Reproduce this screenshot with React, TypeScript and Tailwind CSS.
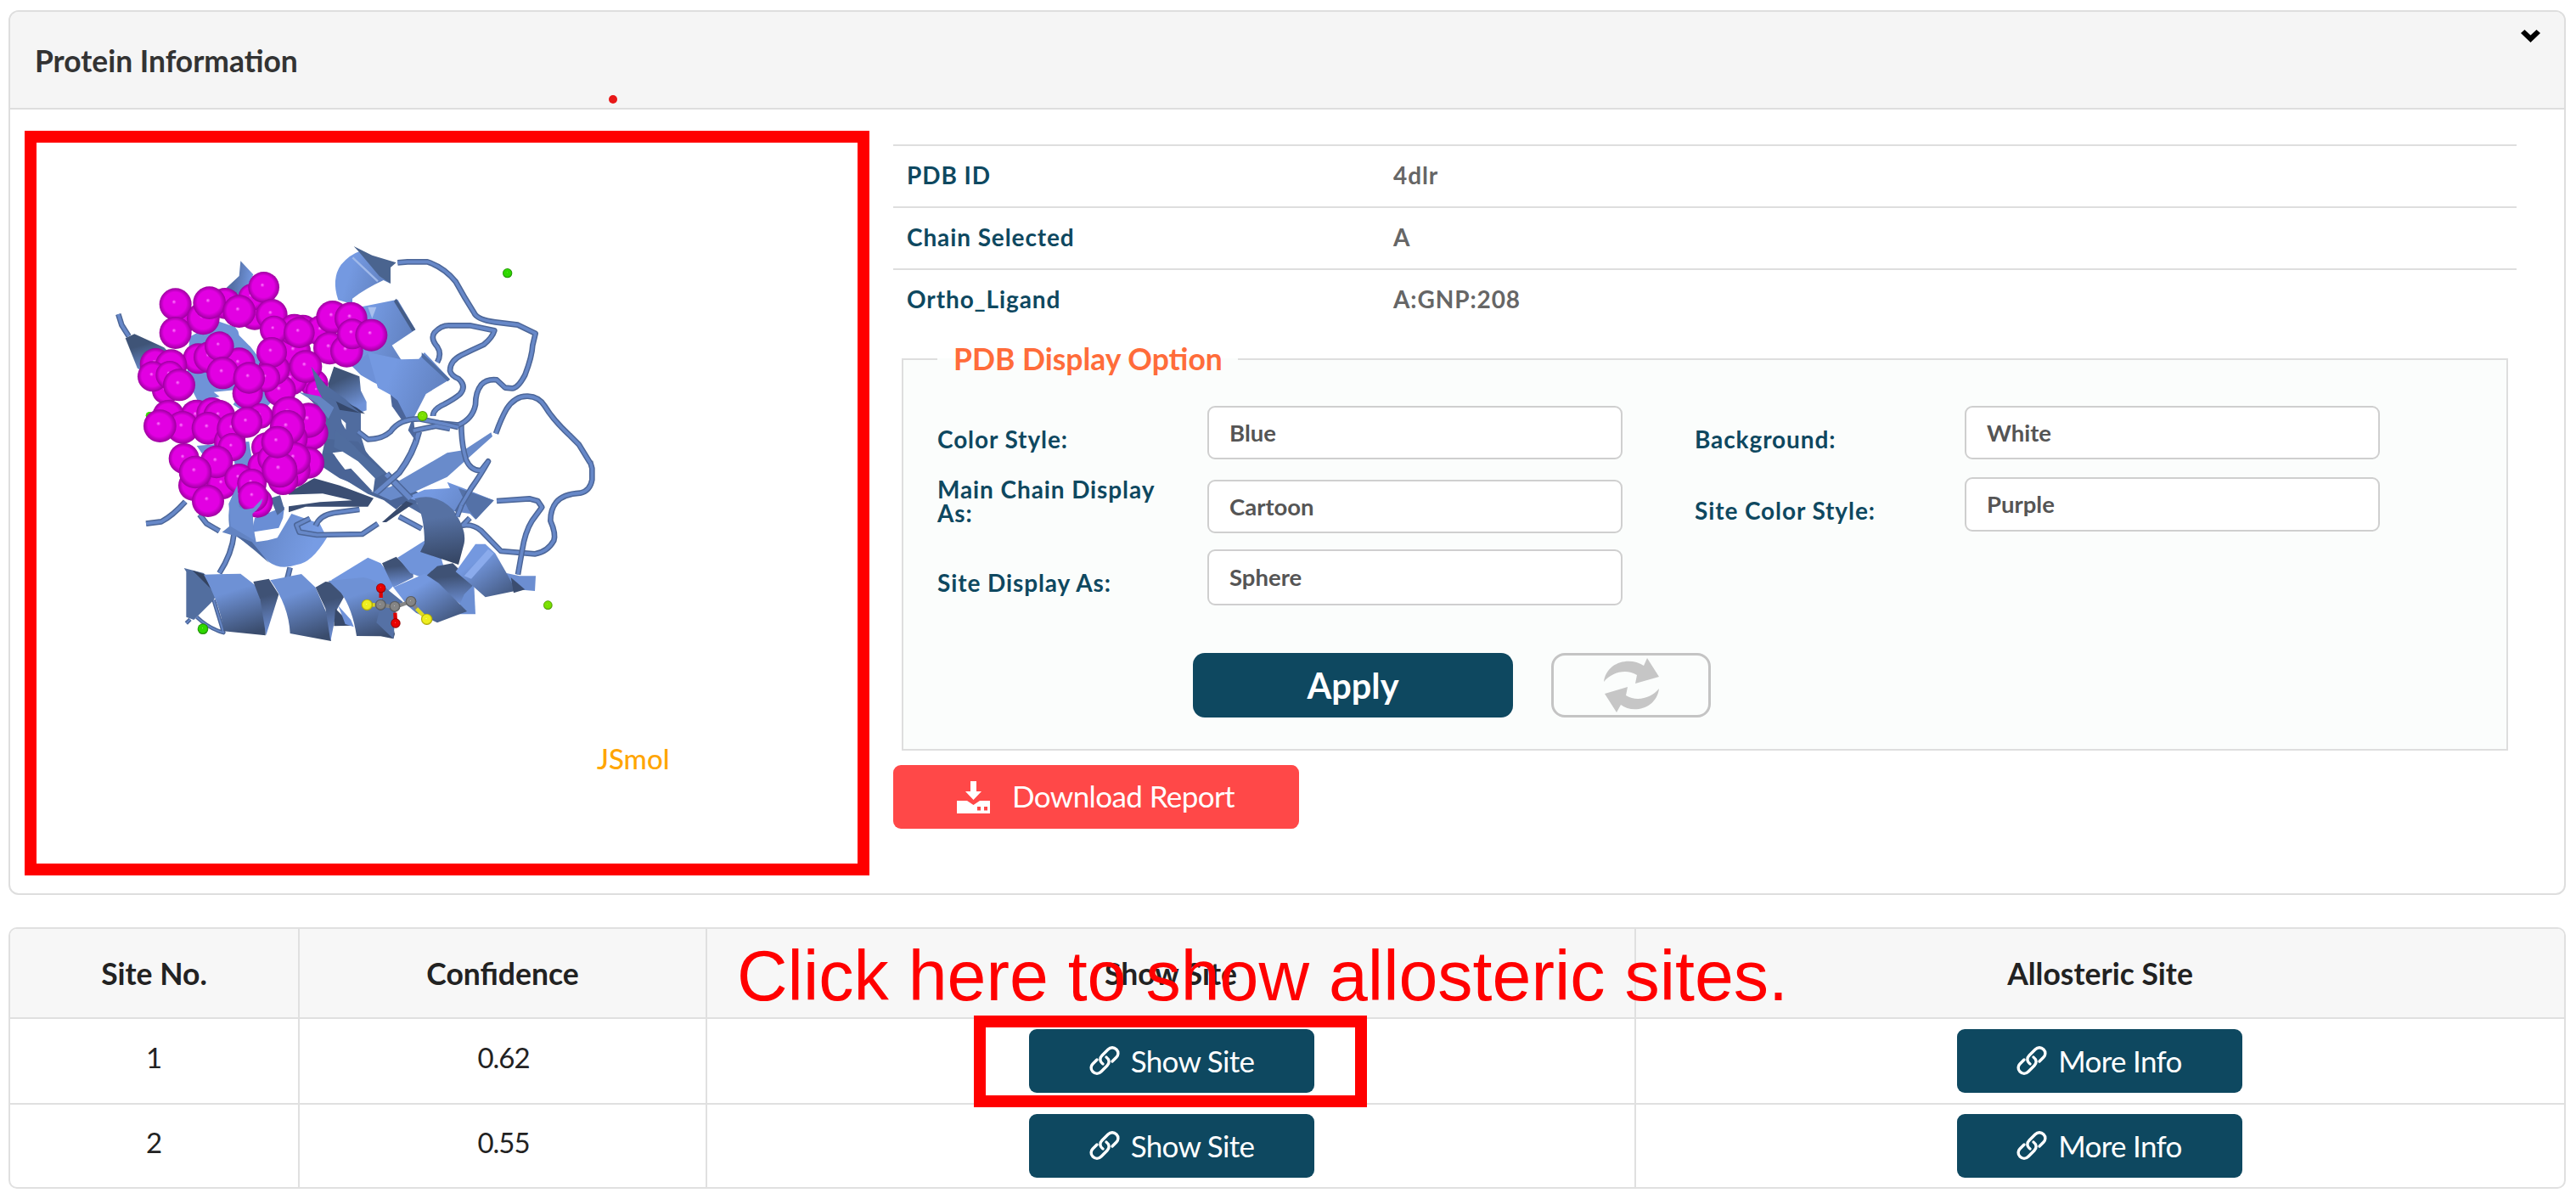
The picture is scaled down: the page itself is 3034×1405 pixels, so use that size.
import React from 'react';

const proteinRows = [
  { label: 'PDB ID', value: '4dlr' },
  { label: 'Chain Selected', value: 'A' },
  { label: 'Ortho_Ligand', value: 'A:GNP:208' },
];

const sites = [
  { no: '1', confidence: '0.62' },
  { no: '2', confidence: '0.55' },
];

// Atoms of the allosteric site, painted back to front: x, y, r
const atoms: number[][] = [
  [495, 292, 55], [600, 330, 56], [345, 350, 50], [590, 270, 48], [320, 295, 57], [320, 396, 57],
  [418, 345, 58], [440, 290, 58], [545, 320, 58], [632, 235, 55], [660, 332, 56],
  [770, 388, 56], [810, 575, 50], [820, 600, 40], [740, 460, 58], [730, 560, 56], [690, 600, 56], [835, 388, 55],
  [875, 340, 58], [940, 345, 58], [865, 450, 58], [925, 460, 58], [945, 400, 54], [1012, 404, 57],
  [740, 385, 56], [668, 385, 50], [668, 525, 56], [660, 465, 54], [757, 395, 55], [780, 515, 58],
  [640, 555, 50], [545, 505, 57], [400, 487, 54], [440, 482, 56], [475, 443, 52], [487, 538, 57],
  [575, 610, 54], [580, 555, 56], [285, 600, 48], [250, 506, 56], [305, 510, 56], [240, 550, 54], [300, 545, 50], [333, 580, 57],
  [395, 690, 58], [450, 680, 56], [475, 690, 57], [295, 690, 57], [345, 730, 58], [265, 725, 58], [435, 733, 58],
  [620, 690, 45], [512, 780, 56], [522, 735, 56], [572, 712, 55],
  [800, 750, 60], [790, 705, 62], [720, 680, 60], [640, 800, 52], [790, 855, 56], [735, 880, 62], [700, 915, 54], [630, 870, 56],
  [350, 840, 54], [385, 935, 55], [485, 930, 54], [520, 800, 50], [465, 852, 58], [390, 888, 58], [435, 990, 57],
  [545, 910, 52], [610, 995, 54], [590, 928, 52], [594, 975, 54], [725, 770, 62], [715, 730, 62], [740, 840, 58], [660, 840, 50],
  [688, 880, 63], [680, 782, 57],
];

function Coil({ d, w = 20 }: { d: string; w?: number }) {
  return (
    <g fill="none" strokeLinejoin="round">
      <path d={d} stroke="#4c6698" strokeWidth={w} />
      <path d={d} stroke="#6788c8" strokeWidth={w - 9} />
    </g>
  );
}

function Ribbons() {
  return (
    <>
      {/* upper left strands */}
      <g transform="translate(100 260) scale(.33333)">
        <path d="M500 237L545 195L550 142L595 190L570 240L540 265Z" fill="url(#ribbon)" />
        <path d="M143 415L175 400L280 448L330 500L210 540L185 520Z" fill="url(#ribbonDark)" />
        <path d="M370 410L470 355L530 375L620 490L660 640L600 700L540 660L480 620L400 640L360 560Z" fill="#6f93d8" />
        <path d="M540 383L620 390L607 455L580 440L545 405Z" fill="#fff" />
        <path d="M455 605L530 598L530 640L520 655Z" fill="#fff" />
        <circle cx="228" cy="688" r="13" fill="#3bdc00" />
        <Coil d="M118 330L130 368L155 408" />
        <path d="M895 280Q870 205 905 155Q935 120 970 108L1080 222L1055 210Q990 240 945 275L945 295Z" fill="url(#ribbonRight)" />
        <path d="M950 90L1015 122L1100 148L1080 165L1080 222L1040 195L970 112Z" fill="#4a648f" />
        <path d="M946 130L1035 214" stroke="#a0b9e9" strokeWidth="7" />
        <path d="M970 305L1105 278L1168 385L1085 440L1118 492L1040 510L940 500Z" fill="url(#ribbonRight)" />
        <path d="M1100 275L1168 385L1156 390L1092 285Z" fill="#455d88" />
        <path d="M1000 305L1030 305L1015 345Z" fill="#a9c0ee" />
        <path d="M940 510L1000 470L1060 590L1018 570L975 545Z" fill="#6d91d8" />
        <path d="M1000 465L1118 490L1180 488L1200 465L1290 560L1205 612L1160 700L1120 695L1080 615L1035 590Z" fill="url(#ribbonRight)" />
        <path d="M1190 465L1290 560L1282 568L1190 482Z" fill="#4f6da3" />
        <path d="M1080 615L1105 635L1140 705L1125 712L1085 655Z" fill="#4b659a" />
        <path d="M880 515L970 550L975 600L995 640L995 670L965 680L860 620L860 575Z" fill="url(#ribbonDark)" />
        <path d="M800 515L850 580L920 630L975 680L975 760L1000 840L1150 980L1300 1100L850 840L850 700L780 610L830 640Z" fill="#506c9f" />
        <path d="M880 620L960 660L990 682L900 668Z" fill="#35486c" />
        <path d="M905 700L922 715L922 738L908 715Z" fill="#fff" />
      </g>
      {/* central sheet */}
      <g transform="translate(400 500) scale(.33333)">
        <path d="M-50 50L65 60L105 110L165 170L310 260L245 290L150 265L100 245L-70 140Z" fill="#4b6697" />
        <path d="M-15 20Q40 60 70 95L160 172L120 195L85 175L10 95L-20 80Z" fill="#506d9f" />
        <path d="M-25 100L10 95L65 130L125 190L118 240Q60 190 20 160L-15 115Z" fill="#fff" />
        <path d="M-60 100L-20 105L15 160L40 155L120 240L200 300L250 255L150 250L0 190L-60 150Z" fill="#4a6496" />
        <path d="M-90 190L0 215L120 260L100 290L-120 290L-180 310L-180 240Z" fill="#3b4e73" />
        <path d="M-195 248L-60 244L44 268L-70 274L-190 290Z" fill="#fff" />
        <path d="M-60 173L20 207L18 220L-60 190Z" fill="#fff" />
        <path d="M120 240L160 205L200 205L380 100L440 90L535 28L540 42L380 185L260 240L180 268Z" fill="#698bcb" />
        <path d="M155 225L185 190L205 205L180 220Z" fill="#fff" />
        <path d="M235 258L300 230L390 225L380 203L430 222L545 268L480 335L460 315L395 305Z" fill="url(#ribbonRight)" />
        <path d="M420 225L545 268L482 335L455 300Z" fill="#5471a7" />
        <path d="M150 345L235 270L260 280L165 345Z" fill="#37496c" />
        <Coil d="M165 175L250 262" w={26} />
        <Coil d="M210 325L290 368" />
        <Coil d="M280 25Q262 100 210 170L130 240" w={23} />
        <Coil d="M885 130L892 155L892 195Q885 235 850 242Q790 245 765 275Q745 300 745 340Q765 385 757 410Q735 450 690 457L570 447L500 375Q470 350 435 356L460 330" />
        <Coil d="M430 0Q430 70 447 125Q465 165 500 162L525 130Q500 175 465 225L415 310" />
        <Coil d="M555 270L670 262L700 270L715 292L680 340Q655 380 645 445L630 530" />
      </g>
      {/* loops on the right */}
      <g transform="translate(380 260) scale(.33333)">
        <path d="M302 740L320 690L330 780Z" fill="#4d699f" />
        <Coil d="M265 148L300 145L370 145Q430 165 470 215Q500 270 535 325Q545 350 610 358L690 368L752 398L742 440Q740 480 715 545Q690 592 670 592L645 590L615 562Q580 558 560 580Q540 605 540 650Q530 700 480 722L390 713" />
        <Coil d="M405 500Q422 470 405 445Q380 415 395 395Q420 368 450 370L520 370L607 388Q600 412 570 437Q530 455 490 475Q450 495 450 530Q455 548 480 558Q510 585 485 613Q465 630 430 648Q390 665 390 690" />
        <Coil d="M612 752Q630 700 650 665Q680 618 725 620Q765 622 785 655Q815 705 875 760L905 790L945 855" />
        <Coil d="M125 745L160 772Q210 772 240 745Q270 700 340 700Q420 715 480 730M320 742L400 725L450 735" />
        <circle cx="353" cy="690" r="18" fill="url(#lime)" />
        <circle cx="653" cy="185" r="17" fill="url(#green)" />
      </g>
      {/* lower helices */}
      <g transform="translate(100 500) scale(.33333)">
        <path d="M395 75L580 60L600 180L530 145L525 110L440 140Z" fill="#6c90d5" />
        <path d="M520 145L570 150L640 240L530 210L515 190Z" fill="#344663" />
        <Coil d="M216 350L270 343Q310 322 355 272" />
        <Coil d="M405 318L430 350L475 376" />
        <Coil d="M527 385Q520 455 475 525" />
        <Coil d="M725 505L715 545" />
        <path d="M600 330L705 290L700 330L685 365L590 380Z" fill="#6a8ed5" />
        <path d="M690 250L705 300L680 320L655 260Z" fill="#4d6898" />
        <path d="M538 215Q540 285 595 290Q590 350 605 415Q650 410 680 400L730 315L830 350L855 400Q800 490 750 495Q690 515 650 485L590 430L535 395L485 380L510 360Q500 280 538 215Z" fill="url(#helixTop)" />
        <path d="M535 392L590 415L650 488L600 445Z" fill="#4c689d" />
        <Coil d="M795 332L748 355L758 380L820 390L980 387L1035 350M815 358Q830 320 880 312L970 300" />

        <path d="M350 507L358 520L358 680L385 690L455 620L470 590L420 525Z" fill="#526e9f" />
        <path d="M380 515L425 530L465 600Z" fill="#34435f" />
        <Coil d="M372 688L358 702M395 680Q440 722 490 735L455 620" w={14} />
        <path d="M420 530L550 527L605 570L640 680L638 745L490 730Q480 640 420 530Z" fill="url(#helix)" />
        <path d="M595 555L650 545L685 600L640 745L620 620Z" fill="url(#helixBack)" />
        <path d="M655 550L765 528L815 575L860 680L870 765L725 738Q720 640 655 550Z" fill="url(#helix)" />
        <path d="M815 575L850 555L900 560L915 610L890 655L868 765L850 650Z" fill="url(#helixBack)" />
        <path d="M870 550L1000 470L1045 490L1100 560L1040 620L900 570Z" fill="#7297df" />
        <path d="M885 650L945 710L880 712Z" fill="#38496a" />
        <path d="M895 640L940 690L950 715L920 705Z" fill="#6f92da" />
        <path d="M860 552L985 540Q1040 550 1060 590L1095 740L1090 757L1045 748L960 747Q945 650 905 595Z" fill="url(#helix)" />
      </g>
      <g transform="translate(400 500) scale(.33333)">
        <path d="M150 490L200 467L260 525L260 540L190 575Z" fill="url(#helixBack)" />
        <path d="M205 470L300 410L350 440L370 510L290 540L250 525Z" fill="#7094da" />
        <path d="M345 500L400 490L470 560L475 610L440 645L300 540Z" fill="url(#helixBack)" />
        <path d="M440 600L475 565L480 670L410 670Z" fill="#6c8fd3" />
        <path d="M190 575L300 527L350 560L450 660L345 700L270 665L240 640Z" fill="url(#helixDiag)" />
        <path d="M160 575L225 628L200 640L190 757L130 700Z" fill="#5571a5" />
        <path d="M410 520L480 422L515 422L550 455L590 525L660 580L515 610L470 570Z" fill="url(#helixDiag)" />
        <path d="M440 535L525 440L545 455L465 545Z" fill="#8babec" />
        <path d="M590 525L635 535L693 535L690 588L620 582Z" fill="#6c8ed1" />
        <path d="M615 595L655 583L605 540Z" fill="#3b4d70" />
        <path d="M265 262Q340 240 400 300Q450 370 440 420L420 495Q360 475 285 450L300 420Q300 320 265 262Z" fill="url(#helixFront)" />
        <Coil d="M415 325L430 285" />
        <circle cx="736" cy="638" r="16" fill="url(#lime)" />
      </g>
    </>
  );
}

function Ligand() {
  return (
    <g transform="translate(400 500) scale(.33333)" fill="none" strokeWidth="13">
      <path d="M97 637L145 637L195 645L252 625L272 650" stroke="#858585" />
      <path d="M272 650L308 688" stroke="#e0dc22" />
      <path d="M97 637L125 637" stroke="#d9d51c" />
      <path d="M146 580L146 612M196 665L198 700" stroke="#dc0000" />
      <circle cx="145" cy="637" r="19" fill="url(#carbon)" />
      <circle cx="195" cy="643" r="19" fill="url(#carbon)" />
      <circle cx="252" cy="625" r="19" fill="url(#carbon)" />
      <circle cx="97" cy="637" r="20" fill="url(#sulfur)" />
      <circle cx="308" cy="688" r="20" fill="url(#sulfur)" />
      <circle cx="146" cy="578" r="17" fill="url(#oxygen)" />
      <circle cx="198" cy="702" r="17" fill="url(#oxygen)" />
    </g>
  );
}

function Ball({ id, light, main, dark }: { id: string; light: string; main: string; dark: string }) {
  return (
    <radialGradient id={id} cx=".5" cy=".5" r=".5" fx=".45" fy=".42">
      <stop offset="0" stopColor={light} />
      <stop offset=".14" stopColor={main} />
      <stop offset=".7" stopColor={main} />
      <stop offset="1" stopColor={dark} />
    </radialGradient>
  );
}

function Shade({ id, from, to, x = '0', y = '1' }: { id: string; from: string; to: string; x?: string; y?: string }) {
  return (
    <linearGradient id={id} x1="0" y1="0" x2={x} y2={y}>
      <stop offset=".35" stopColor={from} />
      <stop offset="1" stopColor={to} />
    </linearGradient>
  );
}

function Molecule() {
  return (
    <svg className="block h-[849px] w-[967px]" viewBox="43 168 967 849">
      <defs>
        <Ball id="site" light="#ff80ff" main="#e200e2" dark="#9c009e" />
        <Ball id="green" light="#8cff50" main="#2fd800" dark="#1c8000" />
        <Ball id="lime" light="#c6ff50" main="#7ae000" dark="#458a00" />
        <Ball id="carbon" light="#c8c8c8" main="#858585" dark="#4a4a4a" />
        <Ball id="sulfur" light="#ffffa0" main="#eeee20" dark="#a09800" />
        <Ball id="oxygen" light="#ff9090" main="#e80000" dark="#880000" />
        <Shade id="ribbon" from="#5470a6" to="#7296de" x="1" y=".2" />
        <Shade id="ribbonDark" from="#3f5477" to="#7093d8" x=".4" />
        <Shade id="ribbonRight" from="#7499e1" to="#6282c1" x="1" y=".3" />
        <Shade id="helix" from="#6e91d5" to="#3a4c6d" x=".35" y="1.1" />
        <Shade id="helixBack" from="#3f5275" to="#6d8fd4" x=".1" />
        <Shade id="helixDiag" from="#7498df" to="#43587f" x=".85" y=".9" />
        <Shade id="helixFront" from="#5671a3" to="#374867" x=".1" />
        <Shade id="helixTop" from="#6283c2" to="#779ce4" x="1" y=".3" />
      </defs>
      <Ribbons />
      <g transform="translate(100 260) scale(.33333)">
        {atoms.map(([x, y, r], i) => (
          <circle key={i} cx={x} cy={y} r={r} fill="url(#site)" />
        ))}
        {/* strand and helix ends passing in front of the site */}
        <path d="M800 515L850 580L975 680L860 625L845 640L820 590Z" fill="#506c9f" />
        <path d="M755 605L830 620L880 660L860 700L820 645Z" fill="#6485c2" />
        <path d="M538 935L545 1010Q560 1025 595 1015L628 980Q625 1010 592 1035L600 1130L515 1080L508 1000Z" fill="#6c8fd3" />
      </g>
      <g transform="translate(100 500) scale(.33333)">
        <circle cx="417" cy="722" r="19" fill="url(#green)" />
      </g>
      <Ligand />
    </svg>
  );
}

function Field({ label, value, labelClass, boxClass }: { label: string; value: string; labelClass: string; boxClass: string }) {
  return (
    <div className="flex items-start">
      <label className={`w-[318px] pr-9 text-[28px] leading-7 font-bold tracking-[0.9px] text-[#0e4860] ${labelClass}`}>{label}</label>
      <div className={`flex w-[489px] items-center rounded-[9px] border-2 border-[#cfcfcf] bg-white pl-6 text-[27.5px] font-bold text-[#555] ${boxClass}`}>
        {value}
      </div>
    </div>
  );
}

function LinkButton({ children }: { children: React.ReactNode }) {
  return (
    <button className="flex h-[75px] w-[336px] items-center justify-center gap-[13px] rounded-[9px] bg-[#0e4860] text-[35px] tracking-[-0.7px] text-white">
      <svg className="h-[34px] w-[36px]" viewBox="0 0 36 34" fill="none" stroke="currentColor" strokeWidth="3.4" strokeLinecap="round">
        <path d="M16 21C12 18 12 14 15 11L22 4C25 1 29 1 32 4C35 7 34 11 32 13L27 18" />
        <path d="M20 13C24 16 24 20 21 23L14 30C11 33 7 33 4 30C1 27 2 23 4 21L9 16" />
      </svg>
      <span>{children}</span>
    </button>
  );
}

export default function App() {
  return (
    <div className="relative h-[1405px] w-[3034px] overflow-hidden bg-white pt-3 pl-[10px] font-['Lato',sans-serif]">
      {/* Protein panel */}
      <section className="h-[1042px] w-[3012px] overflow-hidden rounded-[12px] border-2 border-[#dedede]">
        <header className="flex h-[115px] items-start justify-between border-b-2 border-[#dedede] bg-[#f5f5f5] pl-[29px]">
          <h2 className="text-[35.4px] leading-[115px] font-bold text-[#333]">Protein Information</h2>
          <svg className="mt-[21px] mr-[28px] h-[15px] w-[23px]" viewBox="0 0 23 15">
            <path d="M0 4L4.500 0L11.500 6.500L18.500 0L23 4L11.500 15Z" />
          </svg>
        </header>
        <div className="flex">
          <div className="relative mt-[25px] ml-[17px] h-[877px] w-[995px] border-[14px] border-[#ff0000]">
            <Molecule />
            <span className="absolute top-[705px] left-[660px] text-[33px] leading-10 font-medium text-[#ffa500]">JSmol</span>
          </div>

          <div className="mt-[41px] ml-7 w-[1912px]">
            {proteinRows.map((row) => (
              <div key={row.label} className="flex h-[73px] items-center border-t-2 border-[#dedede] pb-[3px] pl-4 text-[28px] font-bold tracking-[0.9px]">
                <div className="w-[573px] text-[#0e4860]">{row.label}</div>
                <div className="text-[#666]">{row.value}</div>
              </div>
            ))}

            <fieldset className="mt-3 ml-[10px] h-[483px] w-[1892px] border-2 border-[#dedede] bg-[#fbfdfc]">
              <legend className="ml-10 h-11 pr-[18px] pl-[19px] text-[35.5px] leading-[43px] font-bold text-[#ff6c3a]">PDB Display Option</legend>
              <div className="flex gap-[85px] pt-[33px] pl-[40px]">
                <div>
                  <Field label="Color Style:" value="Blue" labelClass="mt-[25px]" boxClass="h-[63px]" />
                  <div className="h-6" />
                  <Field label="Main Chain Display As:" value="Cartoon" labelClass="-mt-[3px]" boxClass="h-[63px]" />
                  <div className="h-[19px]" />
                  <Field label="Site Display As:" value="Sphere" labelClass="mt-[25px]" boxClass="h-[66px]" />
                </div>
                <div>
                  <Field label="Background:" value="White" labelClass="mt-[25px]" boxClass="h-[63px]" />
                  <div className="h-[21px]" />
                  <Field label="Site Color Style:" value="Purple" labelClass="mt-[25px]" boxClass="h-16" />
                </div>
              </div>
              <div className="mt-14 ml-[341px] flex gap-[45px]">
                <button className="h-[76px] w-[377px] rounded-[14px] bg-[#0e4860] text-[41.5px] font-bold text-white">Apply</button>
                <button className="flex h-[76px] w-[188px] items-center justify-center rounded-[16px] border-[3px] border-[#c4c4c4]">
                  <svg className="h-[64px] w-[65px]" viewBox="0 0 65 64" fill="#c6c6c6">
                    <path d="M0 28C3 4 31-2 47 9L51 0L65 22L37 30L39 20C26 12 9 17 0 28Z" />
                    <path d="M65 36C62 60 34 66 20 55L15 64L1 42L28 34L26 44C39 52 56 47 65 36Z" />
                  </svg>
                </button>
              </div>
            </fieldset>

            <button className="mt-[17px] flex h-[75px] w-[478px] items-center rounded-[9px] bg-[#ff4848] pl-[75px] text-[35px] text-white">
              <svg className="h-[38px] w-[39px]" viewBox="0 0 39 38" fill="currentColor">
                <path d="M16 0H23V12H29L19.500 22L10 12H16Z" />
                <path fillRule="evenodd" d="M0 23H12L19.500 28L27 23H39V38H0ZM24 30V34.500H28V30ZM32 30V34.500H36V30Z" />
              </svg>
              <span className="ml-[26px] pb-0.5 tracking-[-0.6px]">Download Report</span>
            </button>
          </div>
        </div>
      </section>

      {/* Sites table */}
      <section className="mt-[38px] h-[308px] w-[3012px] overflow-hidden rounded-[10px] border-2 border-[#e0e0e0] text-[33px] text-[#222]">
        <div className="grid h-[106px] grid-cols-[341px_480px_1094px_1fr] divide-x-2 divide-[#e0e0e0] border-b-2 border-[#e0e0e0] bg-[#f7f7f7] text-[35.5px] font-bold">
          {['Site No.', 'Confidence', 'Show Site', 'Allosteric Site'].map((title) => (
            <div key={title} className="flex items-center justify-center pt-0.5">{title}</div>
          ))}
        </div>
        {sites.map((site) => (
          <div key={site.no} className="grid h-[101px] grid-cols-[341px_480px_1094px_1fr] divide-x-2 divide-[#e0e0e0] border-b-2 border-[#e0e0e0] last:h-[97px] last:border-b-0">
            <div className="flex items-center justify-center pb-2">{site.no}</div>
            <div className="flex items-center justify-center pb-2 pl-0.5 tracking-[-1px]">{site.confidence}</div>
            <div className="flex items-center justify-center pb-px pl-0.5"><LinkButton>Show Site</LinkButton></div>
            <div className="flex items-center justify-center pr-0.5 pb-px"><LinkButton>More Info</LinkButton></div>
          </div>
        ))}
      </section>

      {/* Red call-outs drawn over the page */}
      <div className="absolute top-[112px] left-[717px] h-[10px] w-[10px] rounded-full bg-[#e81818]" />
      <div className="absolute top-[1196px] left-[1147px] h-[108px] w-[463px] border-[14px] border-[#ff0000]" />
      <p className="absolute top-[1103px] left-[868px] font-['Liberation_Sans',sans-serif] text-[82.5px] leading-[92px] whitespace-nowrap text-[#ff0000]">
        Click here to show allosteric sites.
      </p>
    </div>
  );
}
